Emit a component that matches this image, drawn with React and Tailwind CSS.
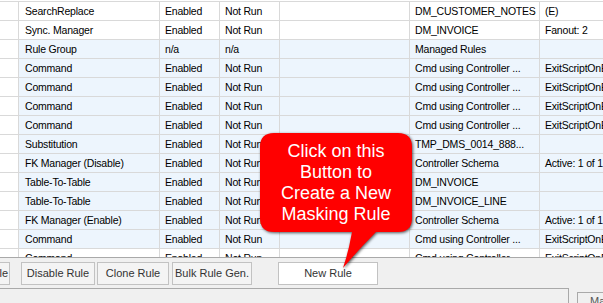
import React from "react";

const rows = [
  ["SearchReplace", "Enabled", "Not Run", "", "DM_CUSTOMER_NOTES", "(E)", false],
  ["Sync. Manager", "Enabled", "Not Run", "", "DM_INVOICE", "Fanout: 2", false],
  ["Rule Group", "n/a", "n/a", "", "Managed Rules", "", true],
  ["Command", "Enabled", "Not Run", "", "Cmd using Controller ...", "ExitScriptOnError", true],
  ["Command", "Enabled", "Not Run", "", "Cmd using Controller ...", "ExitScriptOnError", true],
  ["Command", "Enabled", "Not Run", "", "Cmd using Controller ...", "ExitScriptOnError", true],
  ["Command", "Enabled", "Not Run", "", "Cmd using Controller ...", "ExitScriptOnError", true],
  ["Substitution", "Enabled", "Not Run", "", "TMP_DMS_0014_888...", "", true],
  ["FK Manager (Disable)", "Enabled", "Not Run", "", "Controller Schema", "Active: 1 of 1", true],
  ["Table-To-Table", "Enabled", "Not Run", "", "DM_INVOICE", "", true],
  ["Table-To-Table", "Enabled", "Not Run", "", "DM_INVOICE_LINE", "", true],
  ["FK Manager (Enable)", "Enabled", "Not Run", "", "Controller Schema", "Active: 1 of 1", true],
  ["Command", "Enabled", "Not Run", "", "Cmd using Controller ...", "ExitScriptOnError", true],
  ["Command", "Enabled", "Not Run", "", "Cmd using Controller ...", "ExitScriptOnError", false],
];

function Row({ r }) {
  const bg = r[6] ? "bg-[#edf5fd]" : "bg-white";
  const cell = "h-[18px] leading-[18px] whitespace-nowrap overflow-hidden border-r border-[#d9d9d9] shrink-0";
  return (
    <div className="flex border-t border-[#d9d9d9] h-[19px]">
      <div className="w-[19px] h-[18px] bg-white border-r border-[#d9d9d9] shrink-0" />
      <div className={`${cell} ${bg} w-[141px] pl-[6px]`}>{r[0]}</div>
      <div className={`${cell} ${bg} w-[60px] pl-[5px]`}>{r[1]}</div>
      <div className={`${cell} ${bg} w-[60px] pl-[5px]`}>{r[2]}</div>
      <div className={`${cell} ${bg} w-[130px] pl-[5px]`}>{r[3]}</div>
      <div className={`${cell} ${bg} w-[130px] pl-[5px]`}>{r[4]}</div>
      <div className={`h-[18px] leading-[18px] whitespace-nowrap overflow-hidden ${bg} flex-1 pl-[5px]`}>{r[5]}</div>
    </div>
  );
}

function Btn({ children, className = "" }) {
  return (
    <div
      className={`h-[23px] flex items-center justify-center border border-[#c2c2c2] text-[#333] whitespace-nowrap overflow-hidden shrink-0 ${className}`}
    >
      {children}
    </div>
  );
}

export default function App() {
  return (
    <div
      className="relative w-[603px] h-[303px] overflow-hidden bg-[#f0f0f0] flex flex-col text-[11px] text-black"
      style={{ fontFamily: '"Liberation Sans", Arial, sans-serif' }}
    >
      {/* grid */}
      <div className="h-[258px] shrink-0 overflow-hidden bg-white border-b border-[#a9a9a9] text-[10.5px] tracking-[-0.2px]">
        <div className="h-[1px]" />
        {rows.map((r, i) => (
          <Row key={i} r={r} />
        ))}
      </div>

      {/* button bar */}
      <div className="h-[30px] shrink-0 flex items-start pt-[4px]">
        <Btn className="w-[80px] ml-[-70px] bg-[#f4f4f4] justify-end pr-[1px]">Enable Rule</Btn>
        <Btn className="w-[74px] ml-[11px] bg-[#f4f4f4]">Disable Rule</Btn>
        <Btn className="w-[72px] ml-[2px] bg-[#f4f4f4]">Clone Rule</Btn>
        <Btn className="w-[80px] ml-[3px] bg-[#f4f4f4]">Bulk Rule Gen.</Btn>
        <Btn className="w-[100px] ml-[26px] bg-white">New Rule</Btn>
      </div>

      {/* status bar */}
      <div className="flex-1 flex items-start">
        <div className="w-[569px] h-full border-t border-r border-[#a9a9a9] shrink-0" />
        <div className="ml-[8px] mt-[4px] flex-1 h-full border-t border-l border-[#a9a9a9] pl-[12px] pt-[3px] text-[#555] leading-[11px]">
          Machine
        </div>
      </div>

      {/* callout */}
      <div className="absolute left-[255px] top-[128px] w-[165px] h-[145px]">
        <svg
          width="165"
          height="145"
          viewBox="255 128 165 145"
          className="absolute inset-0"
          style={{ filter: "drop-shadow(1px 1px 1.5px rgba(0,0,0,0.65))" }}
        >
          <path
            d="M274 133 H398 Q412 133 412 147 V218 Q412 232 398 232 H376 Q360 248 343 268 Q349 250 352 232 H274 Q260 232 260 218 V147 Q260 133 274 133 Z"
            fill="#ff0000"
          />
        </svg>
        <div
          className="absolute left-[5px] top-[5px] w-[152px] h-[99px] flex flex-col items-center justify-center text-white text-[18px] leading-[21px]"
          style={{ fontFamily: '"Liberation Sans", Arial, sans-serif' }}
        >
          <div>Click on this</div>
          <div>Button to</div>
          <div>Create a New</div>
          <div>Masking Rule</div>
        </div>
      </div>
    </div>
  );
}
